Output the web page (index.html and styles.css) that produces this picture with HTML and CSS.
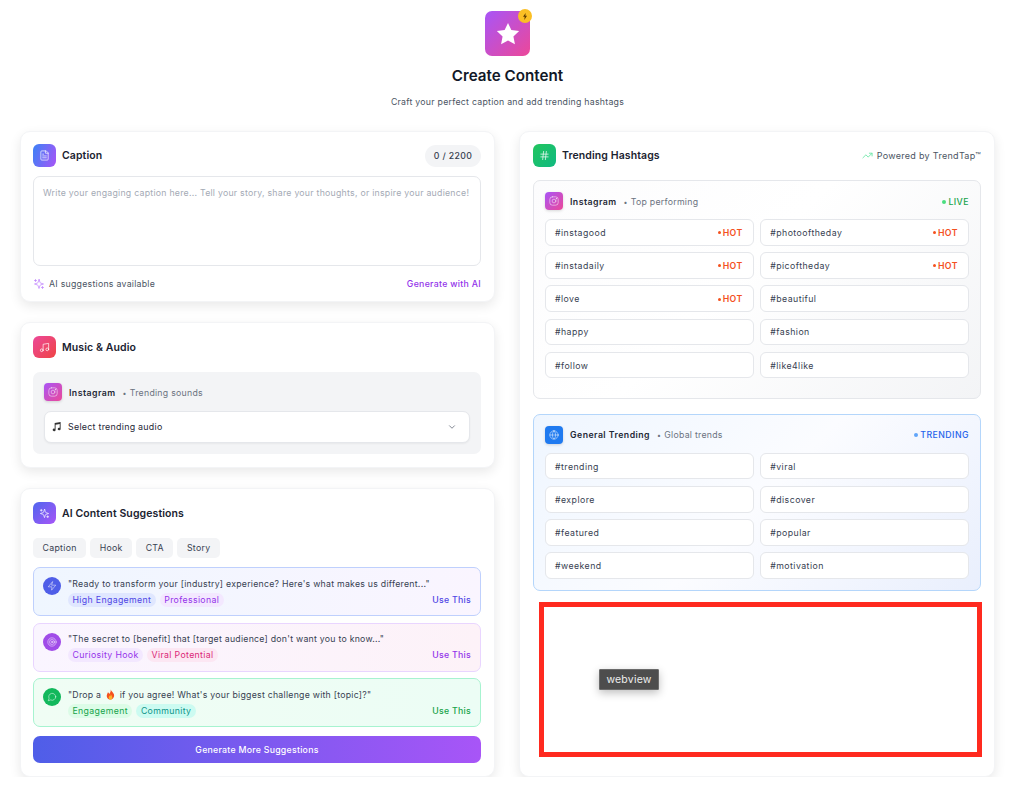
FILE: index.html
```html
<!DOCTYPE html>
<html lang="en">
<head>
    <meta charset="UTF-8">
    <meta name="viewport" content="width=device-width, initial-scale=1.0">
    <title>Create Content</title>
    <link rel="stylesheet" href="styles.css">
</head>
<body>
    <svg class="sprite" width="0" height="0" aria-hidden="true">
        <symbol id="i-file" viewBox="0 0 24 24"><path d="M15 2H6a2 2 0 0 0-2 2v16a2 2 0 0 0 2 2h12a2 2 0 0 0 2-2V7z"/><path d="M14 2v5h6"/><path d="M10 9H8M16 13H8M16 17H8"/></symbol>
        <symbol id="i-music" viewBox="0 0 24 24"><path d="M9 18V5l12-2v13"/><circle cx="6" cy="18" r="3"/><circle cx="18" cy="16" r="3"/></symbol>
        <symbol id="i-insta" viewBox="0 0 24 24"><rect x="2" y="2" width="20" height="20" rx="6"/><circle cx="12" cy="12" r="4.5"/><circle cx="17.5" cy="6.5" r=".6"/></symbol>
        <symbol id="i-sparkle" viewBox="0 0 24 24"><path d="M12 3l-1.9 5.8a2 2 0 0 1-1.3 1.3L3 12l5.800 1.900a2 2 0 0 1 1.300 1.300L12 21l1.900-5.800a2 2 0 0 1 1.300-1.300L21 12l-5.800-1.900a2 2 0 0 1-1.300-1.300z"/><path d="M5 3v4M3 5h4M19 17v4M17 19h4"/></symbol>
        <symbol id="i-hash" viewBox="0 0 24 24"><path d="M4 9h16M4 15h16M10 3L8 21M16 3l-2 18"/></symbol>
        <symbol id="i-trend" viewBox="0 0 24 24"><path d="M22 7l-8.500 8.500-5-5L2 17"/><path d="M16 7h6v6"/></symbol>
        <symbol id="i-globe" viewBox="0 0 24 24"><circle cx="12" cy="12" r="10"/><path d="M2 12h20"/><path d="M12 2a15 15 0 0 1 4 10 15 15 0 0 1-4 10 15 15 0 0 1-4-10 15 15 0 0 1 4-10z"/></symbol>
        <symbol id="i-zap" viewBox="0 0 24 24"><path d="M13 2L3 14h9l-1 8 10-12h-9z"/></symbol>
        <symbol id="i-target" viewBox="0 0 24 24"><circle cx="12" cy="12" r="10"/><circle cx="12" cy="12" r="6"/><circle cx="12" cy="12" r="2"/></symbol>
        <symbol id="i-chat" viewBox="0 0 24 24"><path d="M21 11.500a8.400 8.400 0 0 1-12.200 7.500L3 21l2-5.800A8.400 8.400 0 1 1 21 11.500z"/></symbol>
        <symbol id="i-chevron" viewBox="0 0 24 24"><path d="M6 9l6 6 6-6"/></symbol>
    </svg>

    <div class="page">
        <!-- Heading -->
        <header class="top">
            <div class="logo">
                <svg class="logo-star" viewBox="0 0 24 24"><path d="M12 1.800l3.100 6.600 7.200.9-5.300 5 1.400 7.200-6.400-3.600-6.400 3.600 1.400-7.200-5.300-5 7.200-.9z"/></svg>
                <span class="logo-badge"><svg viewBox="0 0 12 20" preserveAspectRatio="none"><path d="M8 0L0 11h5l-1 9 8-12H7z"/></svg></span>
            </div>
            <h1>Create Content</h1>
            <p>Craft your perfect caption and add trending hashtags</p>
        </header>

        <div class="columns">
            <div class="col">
                <!-- Caption -->
                <section class="card">
                    <div class="card-head">
                        <span class="icon-box bg-caption"><svg class="ico"><use href="#i-file"/></svg></span>
                        <h2>Caption</h2>
                        <span class="counter">0 / 2200</span>
                    </div>
                    <textarea class="caption-input" placeholder="Write your engaging caption here... Tell your story, share your thoughts, or inspire your audience!"></textarea>
                    <div class="caption-foot">
                        <span class="ai-note"><svg class="ico ai-note-icon"><use href="#i-sparkle"/></svg>AI suggestions available</span>
                        <a class="gen-link">Generate with AI</a>
                    </div>
                </section>

                <!-- Music -->
                <section class="card">
                    <div class="card-head head-wide">
                        <span class="icon-box bg-music"><svg class="ico"><use href="#i-music"/></svg></span>
                        <h2>Music &amp; Audio</h2>
                    </div>
                    <div class="audio-panel">
                        <div class="platform">
                            <span class="platform-icon bg-insta"><svg class="ico"><use href="#i-insta"/></svg></span>
                            <strong>Instagram</strong>
                            <span class="platform-sub">Trending sounds</span>
                        </div>
                        <div class="audio-select">
                            <svg class="note" viewBox="0 0 24 24"><path d="M8 4.500L21 2v15.500a3.200 2.800 0 1 1-2-2.600V6.600L10 8.300v11.200a3.200 2.800 0 1 1-2-2.600z"/></svg>
                            <span>Select trending audio</span>
                            <svg class="ico chevron"><use href="#i-chevron"/></svg>
                        </div>
                    </div>
                </section>

                <!-- AI suggestions -->
                <section class="card">
                    <div class="card-head head-wide">
                        <span class="icon-box bg-ai"><svg class="ico"><use href="#i-sparkle"/></svg></span>
                        <h2>AI Content Suggestions</h2>
                    </div>
                    <div class="chips">
                        <span class="chip">Caption</span>
                        <span class="chip">Hook</span>
                        <span class="chip">CTA</span>
                        <span class="chip">Story</span>
                    </div>
                    <div class="suggestions">
                        <div class="sug sug-blue">
                            <span class="sug-icon bg-indigo"><svg class="ico"><use href="#i-zap"/></svg></span>
                            <div class="sug-body">
                                <p>"Ready to transform your [industry] experience? Here's what makes us different..."</p>
                                <div class="sug-row">
                                    <span class="tag tag-indigo">High Engagement</span>
                                    <span class="tag tag-purple">Professional</span>
                                    <a class="use use-indigo">Use This</a>
                                </div>
                            </div>
                        </div>
                        <div class="sug sug-pink">
                            <span class="sug-icon bg-purple"><svg class="ico"><use href="#i-target"/></svg></span>
                            <div class="sug-body">
                                <p>"The secret to [benefit] that [target audience] don't want you to know..."</p>
                                <div class="sug-row">
                                    <span class="tag tag-purple">Curiosity Hook</span>
                                    <span class="tag tag-pink">Viral Potential</span>
                                    <a class="use use-purple">Use This</a>
                                </div>
                            </div>
                        </div>
                        <div class="sug sug-green">
                            <span class="sug-icon bg-green"><svg class="ico"><use href="#i-chat"/></svg></span>
                            <div class="sug-body">
                                <p>"Drop a <svg class="flame" viewBox="0 0 24 24"><path fill="#f4511e" d="M12.500 1c1 4 5.500 6 7 10.500C21 17 17.500 23 12 23S3 18.500 4 13c.5-2.500 2-4 2.500-6 1.500 1 2.500 2.500 2.500 4 2-2 4-5.500 3.500-10z"/><path fill="#fdb32b" d="M12.500 11c.5 2.500 3.500 4 3.500 7.500 0 2.500-2 4.500-4 4.500s-4-2-4-4.500c0-2 1.500-3 2-4.500.8.5 1.200 1 1.500 1.800.8-1.300 1.200-3 1-4.800z"/></svg> if you agree! What's your biggest challenge with [topic]?"</p>
                                <div class="sug-row">
                                    <span class="tag tag-green">Engagement</span>
                                    <span class="tag tag-teal">Community</span>
                                    <a class="use use-green">Use This</a>
                                </div>
                            </div>
                        </div>
                    </div>
                    <button class="more-btn">Generate More Suggestions</button>
                </section>
            </div>

            <div class="col">
                <!-- Hashtags -->
                <section class="card card-tall">
                    <div class="card-head">
                        <span class="icon-box bg-hash"><svg class="ico"><use href="#i-hash"/></svg></span>
                        <h2>Trending Hashtags</h2>
                        <span class="powered"><svg class="ico"><use href="#i-trend"/></svg>Powered by TrendTap™</span>
                    </div>

                    <div class="tag-panel panel-insta">
                        <div class="platform">
                            <span class="platform-icon bg-insta"><svg class="ico"><use href="#i-insta"/></svg></span>
                            <strong>Instagram</strong>
                            <span class="platform-sub">Top performing</span>
                            <span class="status status-live">LIVE</span>
                        </div>
                        <div class="tag-grid">
                            <div class="hash">#instagood<span class="hot">HOT</span></div>
                            <div class="hash">#photooftheday<span class="hot">HOT</span></div>
                            <div class="hash">#instadaily<span class="hot">HOT</span></div>
                            <div class="hash">#picoftheday<span class="hot">HOT</span></div>
                            <div class="hash">#love<span class="hot">HOT</span></div>
                            <div class="hash">#beautiful</div>
                            <div class="hash">#happy</div>
                            <div class="hash">#fashion</div>
                            <div class="hash">#follow</div>
                            <div class="hash">#like4like</div>
                        </div>
                    </div>

                    <div class="tag-panel panel-general">
                        <div class="platform">
                            <span class="platform-icon bg-blue"><svg class="ico"><use href="#i-globe"/></svg></span>
                            <strong>General Trending</strong>
                            <span class="platform-sub">Global trends</span>
                            <span class="status status-trending">TRENDING</span>
                        </div>
                        <div class="tag-grid">
                            <div class="hash">#trending</div>
                            <div class="hash">#viral</div>
                            <div class="hash">#explore</div>
                            <div class="hash">#discover</div>
                            <div class="hash">#featured</div>
                            <div class="hash">#popular</div>
                            <div class="hash">#weekend</div>
                            <div class="hash">#motivation</div>
                        </div>
                    </div>

                    <div class="webview-box">
                        <span class="webview-label">webview</span>
                    </div>
                </section>
            </div>
        </div>
    </div>
</body>
</html>
```

FILE: styles.css
```css
* {
    box-sizing: border-box;
}
body {
    margin: 0;
    background: #fff;
    color: #111827;
    font-family: Inter, "Noto Sans", sans-serif;
    overflow: hidden;
}
h1, h2, p {
    margin: 0;
}
.sprite {
    position: absolute;
}
.page {
    padding: 11px 18px 0 20px;
}

/* heading */
.top {
    display: flex;
    flex-direction: column;
    align-items: center;
    height: 120px;
}
.logo {
    position: relative;
    width: 45px;
    height: 45px;
    display: flex;
    align-items: center;
    justify-content: center;
    border-radius: 7px;
    background: linear-gradient(135deg, #a855f7, #ec4899);
}
.logo-star {
    width: 26px;
    height: 26px;
    fill: #fff;
}
.logo-badge {
    position: absolute;
    top: -2px;
    right: -2px;
    width: 14px;
    height: 14px;
    display: flex;
    align-items: center;
    justify-content: center;
    border-radius: 50%;
    background: #fbbf24;
}
.logo-badge svg {
    width: 4px;
    height: 7px;
    fill: #5c3a00;
}
.top h1 {
    margin-top: 10px;
    font-size: 15.2px;
    line-height: 20px;
    font-weight: 600;
}
.top p {
    margin-top: 10px;
    font-size: 8.75px;
    line-height: 12px;
    color: #4b5563;
    letter-spacing: 0.26px;
}

/* columns and cards */
.columns {
    display: grid;
    grid-template-columns: 475px 476px;
    gap: 24px;
}
.col {
    display: flex;
    flex-direction: column;
    gap: 20px;
}
.card {
    padding: 12px 13px 13px 12px;
    border: 1px solid #f3f4f6;
    border-radius: 10px;
    background: #fff;
    box-shadow: 0 4px 12px rgba(0, 0, 0, 0.09);
}
.card-tall {
    flex: 1;
    padding-left: 13px;
}
.card-head {
    display: flex;
    align-items: center;
    gap: 6px;
    height: 23px;
    margin-bottom: 9px;
}
.head-wide {
    height: 22px;
    margin-top: 1px;
    margin-bottom: 14px;
}
.head-wide .icon-box {
    height: 22px;
}
.card-head h2 {
    flex: 1;
    font-size: 10.5px;
    font-weight: 600;
    letter-spacing: 0.1px;
    color: #1a2230;
}
.icon-box {
    width: 23px;
    height: 23px;
    display: flex;
    align-items: center;
    justify-content: center;
    border-radius: 6px;
    flex-shrink: 0;
}
.ico {
    width: 11px;
    height: 11px;
    fill: none;
    stroke: rgba(255, 255, 255, 0.75);
    stroke-width: 2;
    stroke-linecap: round;
    stroke-linejoin: round;
}
.bg-caption { background: linear-gradient(110deg, #3b82f6, #a855f7); }
.bg-music { background: linear-gradient(135deg, #ec4899, #ef4444); }
.bg-ai { background: linear-gradient(135deg, #4f66ee, #a855f7); }
.bg-hash { background: linear-gradient(135deg, #22c55e, #10b981); }
.bg-insta { background: linear-gradient(135deg, #a855f7, #ec4899); }
.bg-blue { background: #1f7af0; }
.bg-indigo { background: #4f5ee8; }
.bg-purple { background: #a04ce8; }
.bg-green { background: #12b85c; }

/* caption */
.counter {
    width: 56px;
    height: 22px;
    line-height: 22px;
    text-align: center;
    border-radius: 11px;
    background: #f3f4f6;
    color: #374151;
    font-size: 8.75px;
    font-weight: 500;
    letter-spacing: 0.35px;
}
.caption-input {
    display: block;
    width: 100%;
    height: 90px;
    padding: 10px 5px 10px 9px;
    border: 1px solid #e5e7eb;
    border-radius: 7px;
    outline: none;
    resize: none;
    font-family: inherit;
    font-size: 8.75px;
    line-height: 13px;
    letter-spacing: 0.25px;
    overflow: hidden;
}
.caption-input::placeholder {
    color: #a4aab5;
}
.caption-foot {
    display: flex;
    justify-content: space-between;
    align-items: center;
    height: 12px;
    margin-top: 12px;
    margin-bottom: -2px;
    font-size: 8.75px;
    letter-spacing: 0.26px;
}
.ai-note {
    display: flex;
    align-items: center;
    gap: 4px;
    color: #4b5563;
}
.ai-note-icon {
    width: 12px;
    height: 12px;
    stroke: #c084fc;
    stroke-width: 1.5;
}
.gen-link {
    color: #9333ea;
    font-weight: 500;
    letter-spacing: 0.3px;
}

/* platform rows */
.platform {
    display: flex;
    align-items: center;
    height: 18px;
    font-size: 8.75px;
    letter-spacing: 0.45px;
}
.platform strong {
    margin-left: 7px;
    padding-top: 1px;
    font-weight: 600;
    color: #1f2937;
}
.platform-sub {
    padding-top: 1px;
    color: #6b7280;
    letter-spacing: 0.26px;
}
.platform-sub::before {
    content: "•";
    margin: 0 3px 0 7px;
    font-size: 7px;
}
.platform-icon {
    width: 18px;
    height: 18px;
    display: flex;
    align-items: center;
    justify-content: center;
    border-radius: 4px;
    box-shadow: 0 1px 3px rgba(0, 0, 0, 0.15);
}
.platform-icon .ico {
    width: 10px;
    height: 10px;
    stroke-width: 1.6;
}

/* music */
.audio-panel {
    padding: 11px;
    border-radius: 7px;
    background: #f3f4f6;
}
.audio-select {
    display: flex;
    align-items: center;
    height: 32px;
    margin-top: 10px;
    padding: 0 12px 1px 6px;
    border: 1px solid #e5e7eb;
    border-radius: 7px;
    background: #fff;
    box-shadow: 0 1px 2px rgba(0, 0, 0, 0.05);
    font-size: 8.9px;
    letter-spacing: 0.26px;
    color: #1f2937;
}
.note {
    width: 11px;
    height: 11px;
    margin-right: 6px;
    fill: #333;
}
.audio-select span {
    flex: 1;
}
.chevron {
    width: 10px;
    height: 10px;
    stroke: #6b7280;
}

/* ai suggestions */
.chips {
    display: flex;
    gap: 4px;
    margin-bottom: 9px;
}
.chip {
    height: 20px;
    line-height: 20px;
    padding: 0 9.5px;
    border-radius: 5px;
    background: #f3f4f6;
    color: #374151;
    font-size: 8.75px;
    letter-spacing: 0.3px;
}
.suggestions {
    display: flex;
    flex-direction: column;
    gap: 6.5px;
}
.sug {
    display: flex;
    height: 49px;
    padding: 9px 9px 0;
    border: 1px solid;
    border-radius: 7px;
}
.sug-blue {
    border-color: #bfd0fd;
    background: linear-gradient(90deg, #eff6ff, #faf5ff);
}
.sug-pink {
    border-color: #e9d5ff;
    background: linear-gradient(90deg, #faf5ff, #fdf2f8);
}
.sug-green {
    border-color: #a7f3d0;
    background: linear-gradient(90deg, #f0fdf4, #ecfdf5);
}
.sug-icon {
    width: 18px;
    height: 18px;
    display: flex;
    align-items: center;
    justify-content: center;
    border-radius: 50%;
    flex-shrink: 0;
    margin-right: 7px;
}
.sug-icon .ico {
    width: 10px;
    height: 10px;
    stroke-width: 1.6;
}
.sug-body {
    flex: 1;
    min-width: 0;
    padding-top: 0.5px;
}
.sug-body p {
    font-size: 8.75px;
    line-height: 12px;
    letter-spacing: 0.25px;
    color: #374151;
    white-space: nowrap;
}
.flame {
    width: 11px;
    height: 11px;
    vertical-align: -2px;
    margin: 0 1px;
}
.sug-row {
    display: flex;
    align-items: center;
    gap: 4px;
    margin-top: 3px;
}
.tag {
    height: 14px;
    line-height: 14px;
    padding: 0 4.5px;
    border-radius: 7px;
    font-size: 8.75px;
    letter-spacing: 0.34px;
}
.tag-indigo { background: #e0e7ff; color: #4f46e5; }
.tag-purple { background: #f3e8ff; color: #9333ea; }
.tag-pink { background: #fce7f3; color: #db2777; }
.tag-green { background: #dcfce7; color: #16a34a; }
.tag-teal { background: #ccfbf1; color: #0d9488; }
.use {
    margin-left: auto;
    font-size: 8.75px;
    font-weight: 500;
    letter-spacing: 0.26px;
}
.use-indigo { color: #4f46e5; }
.use-purple { color: #9333ea; }
.use-green { color: #16a34a; }
.more-btn {
    display: block;
    width: 100%;
    height: 27px;
    margin-top: 9px;
    border: none;
    border-radius: 7px;
    background: linear-gradient(90deg, #4f5ee8, #a855f7);
    color: #fff;
    font-family: inherit;
    font-size: 8.75px;
    font-weight: 500;
    letter-spacing: 0.26px;
}

/* hashtags */
.powered {
    display: flex;
    align-items: center;
    gap: 4px;
    font-size: 9px;
    letter-spacing: 0.3px;
    color: #4b5563;
}
.powered .ico {
    width: 11px;
    height: 11px;
    stroke: #6ee7a8;
}
.tag-panel {
    padding: 11px;
    border: 1px solid;
    border-radius: 7px;
    margin-top: 13px;
}
.panel-insta {
    padding-bottom: 19.5px;
    margin-bottom: 15px;
    border-color: #e5e7eb;
    background: linear-gradient(135deg, #fcfcfd, #fff 45%, #f3f4f6);
}
.panel-general {
    margin-top: 0;
    border-color: #b4d6fb;
    background: linear-gradient(135deg, #eff6ff, #fbfcff 50%, #e9effd);
}
.status {
    margin-left: auto;
    padding-top: 1px;
    display: flex;
    align-items: center;
    gap: 2px;
    font-weight: 500;
}
.status::before {
    content: "";
    width: 4px;
    height: 4px;
    border-radius: 50%;
}
.status-live { color: #16a34a; }
.status-live::before { background: #4ade80; }
.status-trending { color: #2563eb; }
.status-trending::before { background: #60a5fa; }
.tag-grid {
    display: grid;
    grid-template-columns: 1fr 1fr;
    gap: 6.6px 6.5px;
    margin-top: 9px;
}
.hash {
    display: flex;
    justify-content: space-between;
    align-items: center;
    height: 26.6px;
    padding: 1px 10px 0 9px;
    border: 1px solid #e5e7eb;
    border-radius: 6px;
    background: #fff;
    color: #374151;
    font-size: 8.75px;
    letter-spacing: 0.45px;
}
.hot {
    display: flex;
    align-items: center;
    gap: 2px;
    color: #f4511e;
    font-weight: 600;
}
.hot::before {
    content: "";
    width: 3px;
    height: 3px;
    border-radius: 50%;
    background: #f4511e;
}
.webview-box {
    width: 443px;
    height: 155px;
    margin: 11px 0 0 6px;
    padding: 60px 0 0 55px;
    border: 5px solid #ff2a1f;
    background: #fff;
}
.webview-label {
    display: inline-block;
    width: 60px;
    height: 21px;
    line-height: 19px;
    text-align: center;
    border: 1px solid #6b6b6b;
    border-radius: 1px;
    background: #4d4d4d;
    color: #eee;
    font-size: 10.5px;
    letter-spacing: 0.2px;
    box-shadow: 0 3px 8px rgba(0, 0, 0, 0.25);
}
```
